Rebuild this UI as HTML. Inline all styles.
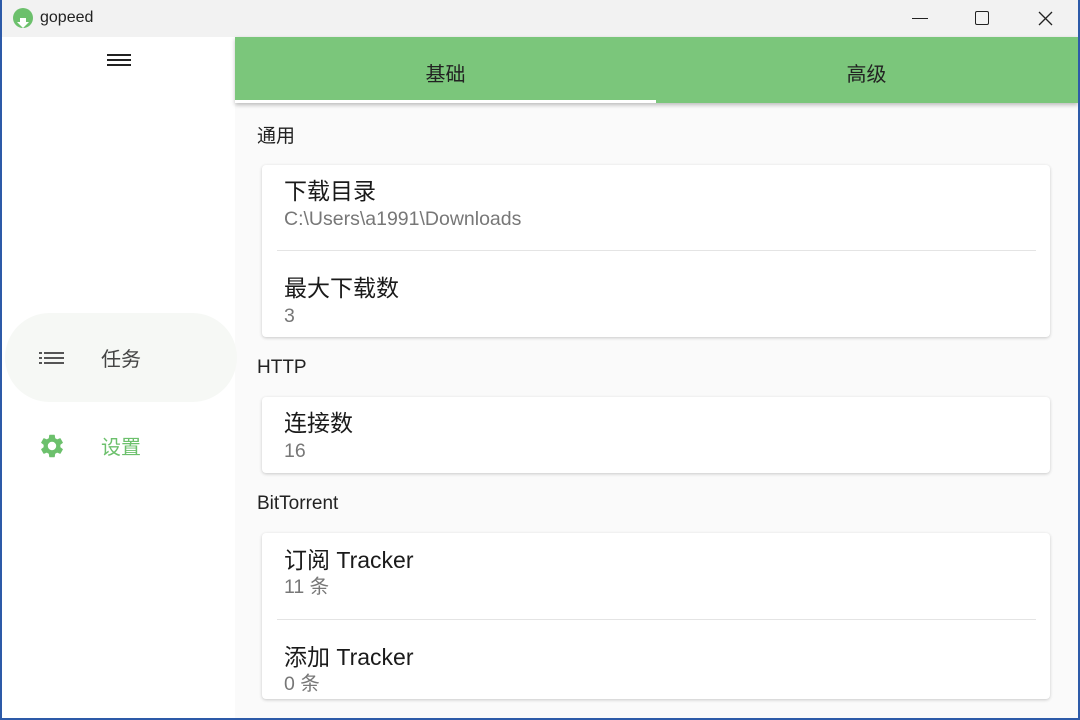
<!DOCTYPE html><html><head><meta charset="utf-8"><style>
*{margin:0;padding:0;box-sizing:border-box}
body{width:1080px;height:720px;overflow:hidden;background:#2d5aa8;font-family:"Liberation Sans","Noto Sans CJK SC",sans-serif;position:relative}
.win{position:absolute;left:2px;top:0;width:1076px;height:718px;background:#fafafa;overflow:hidden}
.title{position:absolute;left:0;top:0;width:1076px;height:37px;background:#f2f2f2}
.side{position:absolute;left:0;top:37px;width:233px;height:681px;background:#fff}
.tabs{position:absolute;left:233px;top:37px;width:843px;height:66px;background:#7bc67b;box-shadow:0 2px 4px rgba(0,0,0,.25)}
.tab{position:absolute;top:0;height:66px;line-height:77px;width:421px;text-align:center;font-size:20px;color:#222}
.ind{position:absolute;left:0;top:63px;width:421px;height:3px;background:#fff}
.h{position:absolute;left:255px;font-size:19px;color:#222}
.card{position:absolute;left:260px;width:788px;background:#fff;border-radius:4px;box-shadow:0 1px 3px rgba(0,0,0,.2)}
.t{position:absolute;left:22px;font-size:23px;color:#1a1a1a;line-height:28px}
.s{position:absolute;left:22px;font-size:19.5px;color:#777;line-height:24px}
.dv{position:absolute;left:15px;right:14px;height:1px;background:#e4e4e4}
</style></head><body>
<div class="win">
<div class="title">
<svg style="position:absolute;left:10px;top:8px" width="22" height="20" viewBox="0 0 22 20"><circle cx="11" cy="10" r="10" fill="#6cc06c"/><path d="M8 10h6v4h3l-6 6-6-6h3z" fill="#fff"/></svg>
<div style="position:absolute;left:38px;top:9px;font-size:16px;color:#222">gopeed</div>
<div style="position:absolute;left:910px;top:18px;width:16px;height:1px;background:#222"></div>
<div style="position:absolute;left:973px;top:11px;width:14px;height:14px;border:1.5px solid #222;border-radius:2px"></div>
<svg style="position:absolute;left:1036px;top:11px" width="15" height="15"><path d="M1 1L14 14M14 1L1 14" stroke="#222" stroke-width="1.3"/></svg>
</div>
<div class="side">
<div style="position:absolute;left:105px;top:17px;width:24px;height:2px;background:#222;box-shadow:0 5px 0 #222,0 10px 0 #222"></div>
<div style="position:absolute;left:3px;top:276px;width:232px;height:89px;background:#f6f8f5;border-radius:45px"></div>
<svg style="position:absolute;left:36px;top:314px" width="28" height="14"><g fill="#555"><rect x="1" y="1" width="3" height="2"/><rect x="6" y="1" width="20" height="2"/><rect x="1" y="6" width="3" height="2"/><rect x="6" y="6" width="20" height="2"/><rect x="1" y="11" width="3" height="2"/><rect x="6" y="11" width="20" height="2"/></g></svg>
<div style="position:absolute;left:99px;top:306px;font-size:20px;color:#444">任务</div>
<svg style="position:absolute;left:36px;top:395px" width="28" height="28" viewBox="0 0 24 24"><path fill="#6cc06c" d="M19.14 12.94c.04-.3.06-.61.06-.94 0-.32-.02-.64-.07-.94l2.03-1.58a.49.49 0 0 0 .12-.61l-1.92-3.32a.49.49 0 0 0-.59-.22l-2.39.96c-.5-.38-1.03-.7-1.62-.94l-.36-2.54a.48.48 0 0 0-.48-.41h-3.84c-.24 0-.43.17-.47.41l-.36 2.54c-.59.24-1.13.57-1.62.94l-2.39-.96a.48.48 0 0 0-.59.22L2.74 8.87c-.12.21-.08.47.12.61l2.03 1.58c-.05.3-.09.63-.09.94s.02.64.07.94l-2.03 1.58a.49.49 0 0 0-.12.61l1.92 3.32c.12.22.37.29.59.22l2.39-.96c.5.38 1.03.7 1.62.94l.36 2.54c.05.24.24.41.48.41h3.84c.24 0 .44-.17.47-.41l.36-2.54c.59-.24 1.13-.56 1.62-.94l2.39.96c.22.08.47 0 .59-.22l1.92-3.32a.49.49 0 0 0-.12-.61l-2.01-1.58zM12 15.6A3.6 3.6 0 1 1 12 8.4a3.6 3.6 0 0 1 0 7.2z"/></svg>
<div style="position:absolute;left:99px;top:394px;font-size:20px;color:#6cc06c">设置</div>
</div>
<div class="tabs"><div class="tab" style="left:0">基础</div><div class="tab" style="left:421px">高级</div><div class="ind"></div></div>
<div class="h" style="top:121px">通用</div>
<div class="card" style="top:165px;height:172px">
<div class="t" style="top:12px">下载目录</div><div class="s" style="top:42px">C:\Users\a1991\Downloads</div>
<div class="dv" style="top:85px"></div>
<div class="t" style="top:109px">最大下载数</div><div class="s" style="top:139px">3</div>
</div>
<div class="h" style="top:357px">HTTP</div>
<div class="card" style="top:397px;height:76px">
<div class="t" style="top:12px">连接数</div><div class="s" style="top:42px">16</div>
</div>
<div class="h" style="top:493px">BitTorrent</div>
<div class="card" style="top:533px;height:166px">
<div class="t" style="top:13px">订阅 Tracker</div><div class="s" style="top:42px">11 条</div>
<div class="dv" style="top:86px"></div>
<div class="t" style="top:110px">添加 Tracker</div><div class="s" style="top:139px">0 条</div>
</div>
</div>
</body></html>
